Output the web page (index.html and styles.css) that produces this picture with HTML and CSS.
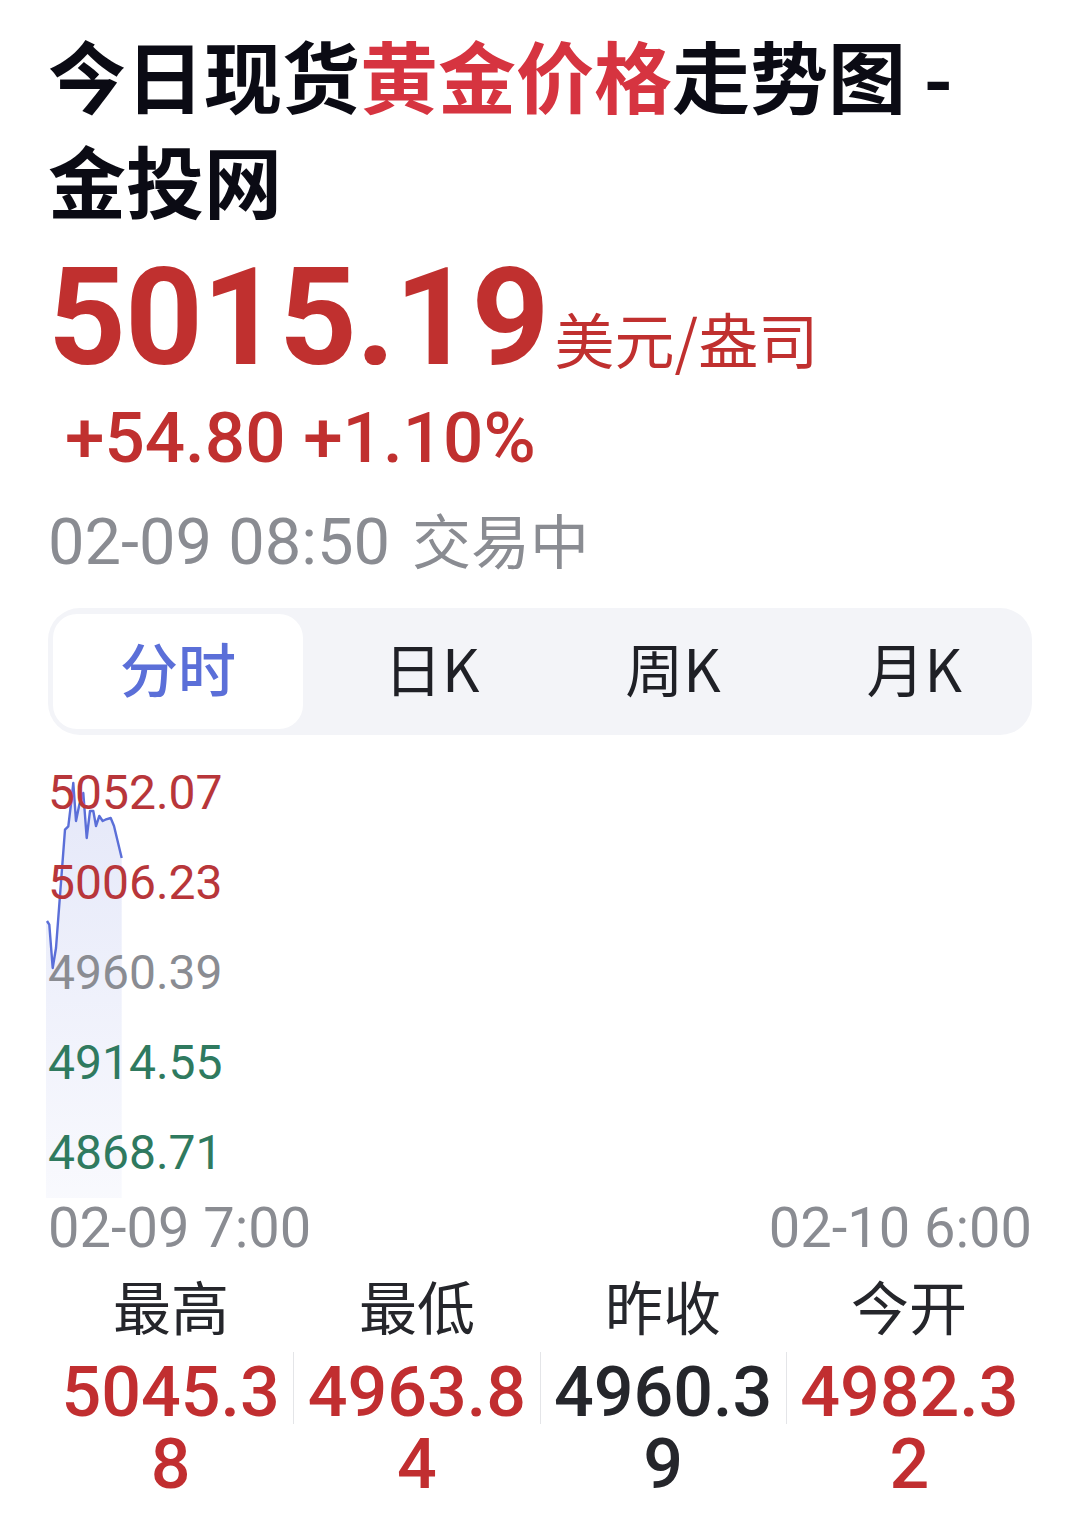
FILE: index.html
```html
<!DOCTYPE html>
<html lang="zh-CN">
<head>
<meta charset="utf-8">
<title>今日现货黄金价格走势图 - 金投网</title>
<link rel="stylesheet" href="styles.css">
</head>
<body>
<main class="page">
  <h1 class="title"><span>今日现货</span><span class="title-red">黄金价格</span><span>走势图 -</span> <span>金投网</span></h1>

  <div class="price-row">
    <span class="price">5015.19</span><span class="unit">美元/盎司</span>
  </div>
  <div class="change">+54.80 +1.10%</div>
  <div class="time"><span class="time-num">02-09 08:50</span><span class="time-state">交易中</span></div>

  <div class="tabs">
    <div class="tab active">分时</div>
    <div class="tab">日K</div>
    <div class="tab">周K</div>
    <div class="tab">月K</div>
  </div>

  <div class="chart">
    <svg class="chart-svg" viewBox="0 0 984 450" preserveAspectRatio="none">
      <defs>
        <linearGradient id="fillGrad" x1="0" y1="0" x2="0" y2="1">
          <stop offset="0" stop-color="#5b6fd8" stop-opacity="0.16"/>
          <stop offset="1" stop-color="#5b6fd8" stop-opacity="0.04"/>
        </linearGradient>
      </defs>
      <polygon fill="url(#fillGrad)" points="-2,173 1.3,176.7 4.7,220 8,200 17,81.7 20.3,78.3 23.7,50 25.3,35 28,73 31.3,56.7 35.3,45 38.7,90 42,63 45.3,63 48,78 51.3,68 54.7,73 57.3,71.7 62.7,70 66,78 73.7,110 73.7,450 -2,450"/>
      <polyline fill="none" stroke="#5b6fd8" stroke-width="2.4" stroke-linejoin="round" points="-1,173 1.3,176.7 4.7,220 8,200 17,81.7 20.3,78.3 23.7,50 25.3,35 28,73 31.3,56.7 35.3,45 38.7,90 42,63 45.3,63 48,78 51.3,68 54.7,73 57.3,71.7 62.7,70 66,78 73.7,110"/>
    </svg>
    <div class="axis-label up">5052.07</div>
    <div class="axis-label up">5006.23</div>
    <div class="axis-label flat">4960.39</div>
    <div class="axis-label down">4914.55</div>
    <div class="axis-label down">4868.71</div>
  </div>

  <div class="x-axis">
    <span>02-09 7:00</span>
    <span>02-10 6:00</span>
  </div>

  <div class="stats-labels">
    <div class="stat-label">最高</div>
    <div class="stat-label">最低</div>
    <div class="stat-label">昨收</div>
    <div class="stat-label">今开</div>
  </div>
  <div class="stats-values">
    <div class="stat-value up">5045.38</div>
    <div class="sep"></div>
    <div class="stat-value up">4963.84</div>
    <div class="sep"></div>
    <div class="stat-value flat">4960.39</div>
    <div class="sep"></div>
    <div class="stat-value up">4982.32</div>
  </div>
</main>
</body>
</html>
```
FILE: styles.css
```css
* { box-sizing: border-box; }
html, body { margin: 0; padding: 0; background: #ffffff; }
body {
  font-family: "Roboto", "Noto Sans CJK SC", sans-serif;
  color: #1f2026;
}
.page {
  padding: 22px 48px 0 48px;
}
.title {
  margin: 0;
  font-family: "Noto Sans CJK SC", sans-serif;
  font-weight: 700;
  font-size: 78px;
  line-height: 105px;
  color: #0b0b14;
}
.title-red { color: #d63440; }

.price-row {
  margin-top: 16px;
  line-height: 140px;
  height: 140px;
  white-space: nowrap;
}
.price {
  font-family: "Roboto", sans-serif;
  font-weight: 700;
  font-size: 136px;
  color: #c0302f;
  letter-spacing: -1px;
}
.unit {
  font-family: "Noto Sans CJK SC", sans-serif;
  font-size: 60px;
  color: #c0302f;
  margin-left: 6px;
}
.change {
  margin-top: 10px;
  padding-left: 17px;
  font-family: "Roboto", sans-serif;
  font-weight: 500;
  font-size: 71px;
  line-height: 80px;
  color: #c0302f;
}
.time {
  margin-top: 21px;
  font-family: "Noto Sans CJK SC", sans-serif;
  font-size: 58px;
  line-height: 80px;
  height: 80px;
  color: #8a8c92;
  white-space: nowrap;
}
.time-num {
  font-family: "Roboto", sans-serif;
  font-size: 65px;
}
.time-state {
  margin-left: 22px;
  font-size: 59px;
}

.tabs {
  margin-top: 29px;
  height: 127px;
  background: #f3f4f8;
  border-radius: 32px;
  padding: 6px 5px;
  display: flex;
}
.tab {
  flex: 1;
  display: flex;
  align-items: center;
  justify-content: center;
  padding-left: 16px;
  padding-bottom: 10px;
  font-family: "Noto Sans CJK SC", sans-serif;
  font-size: 58px;
  color: #1f2026;
}
.tab.active {
  flex: 0 0 250px;
  padding-left: 0;
  background: #ffffff;
  border-radius: 24px;
  color: #5b6fd8;
  font-weight: 500;
}

.chart {
  position: relative;
  margin-top: 15px;
  height: 450px;
}
.chart-svg {
  position: absolute;
  left: 0;
  top: 0;
  width: 100%;
  height: 100%;
  overflow: visible;
}
.axis-label {
  position: relative;
  font-family: "Roboto", sans-serif;
  font-size: 48px;
  line-height: 90px;
  height: 90px;
  margin-top: -2px;
  margin-bottom: 2px;
}
.axis-label.up { color: #b8363a; }
.axis-label.flat { color: #8a8c92; }
.axis-label.down { color: #2f7a5f; }

.x-axis {
  display: flex;
  justify-content: space-between;
  font-family: "Roboto", sans-serif;
  font-size: 56px;
  line-height: 60px;
  color: #8a8c92;
}

.stats-labels {
  margin-top: 12px;
  display: flex;
}
.stat-label {
  flex: 1;
  text-align: center;
  font-family: "Noto Sans CJK SC", sans-serif;
  font-size: 58px;
  line-height: 70px;
  color: #25262b;
}
.stats-values {
  margin-top: 16px;
  display: flex;
  align-items: flex-start;
}
.stat-value {
  flex: 1;
  min-width: 0;
  text-align: center;
  word-break: break-all;
  font-family: "Roboto", sans-serif;
  font-weight: 500;
  font-size: 70px;
  line-height: 72px;
  padding: 0 4px;
}
.stat-value.up { color: #c12e30; }
.stat-value.flat { color: #25262b; }
.sep {
  flex: 0 0 1px;
  height: 72px;
  margin-top: -4px;
  background: #e4e5e8;
}
```
